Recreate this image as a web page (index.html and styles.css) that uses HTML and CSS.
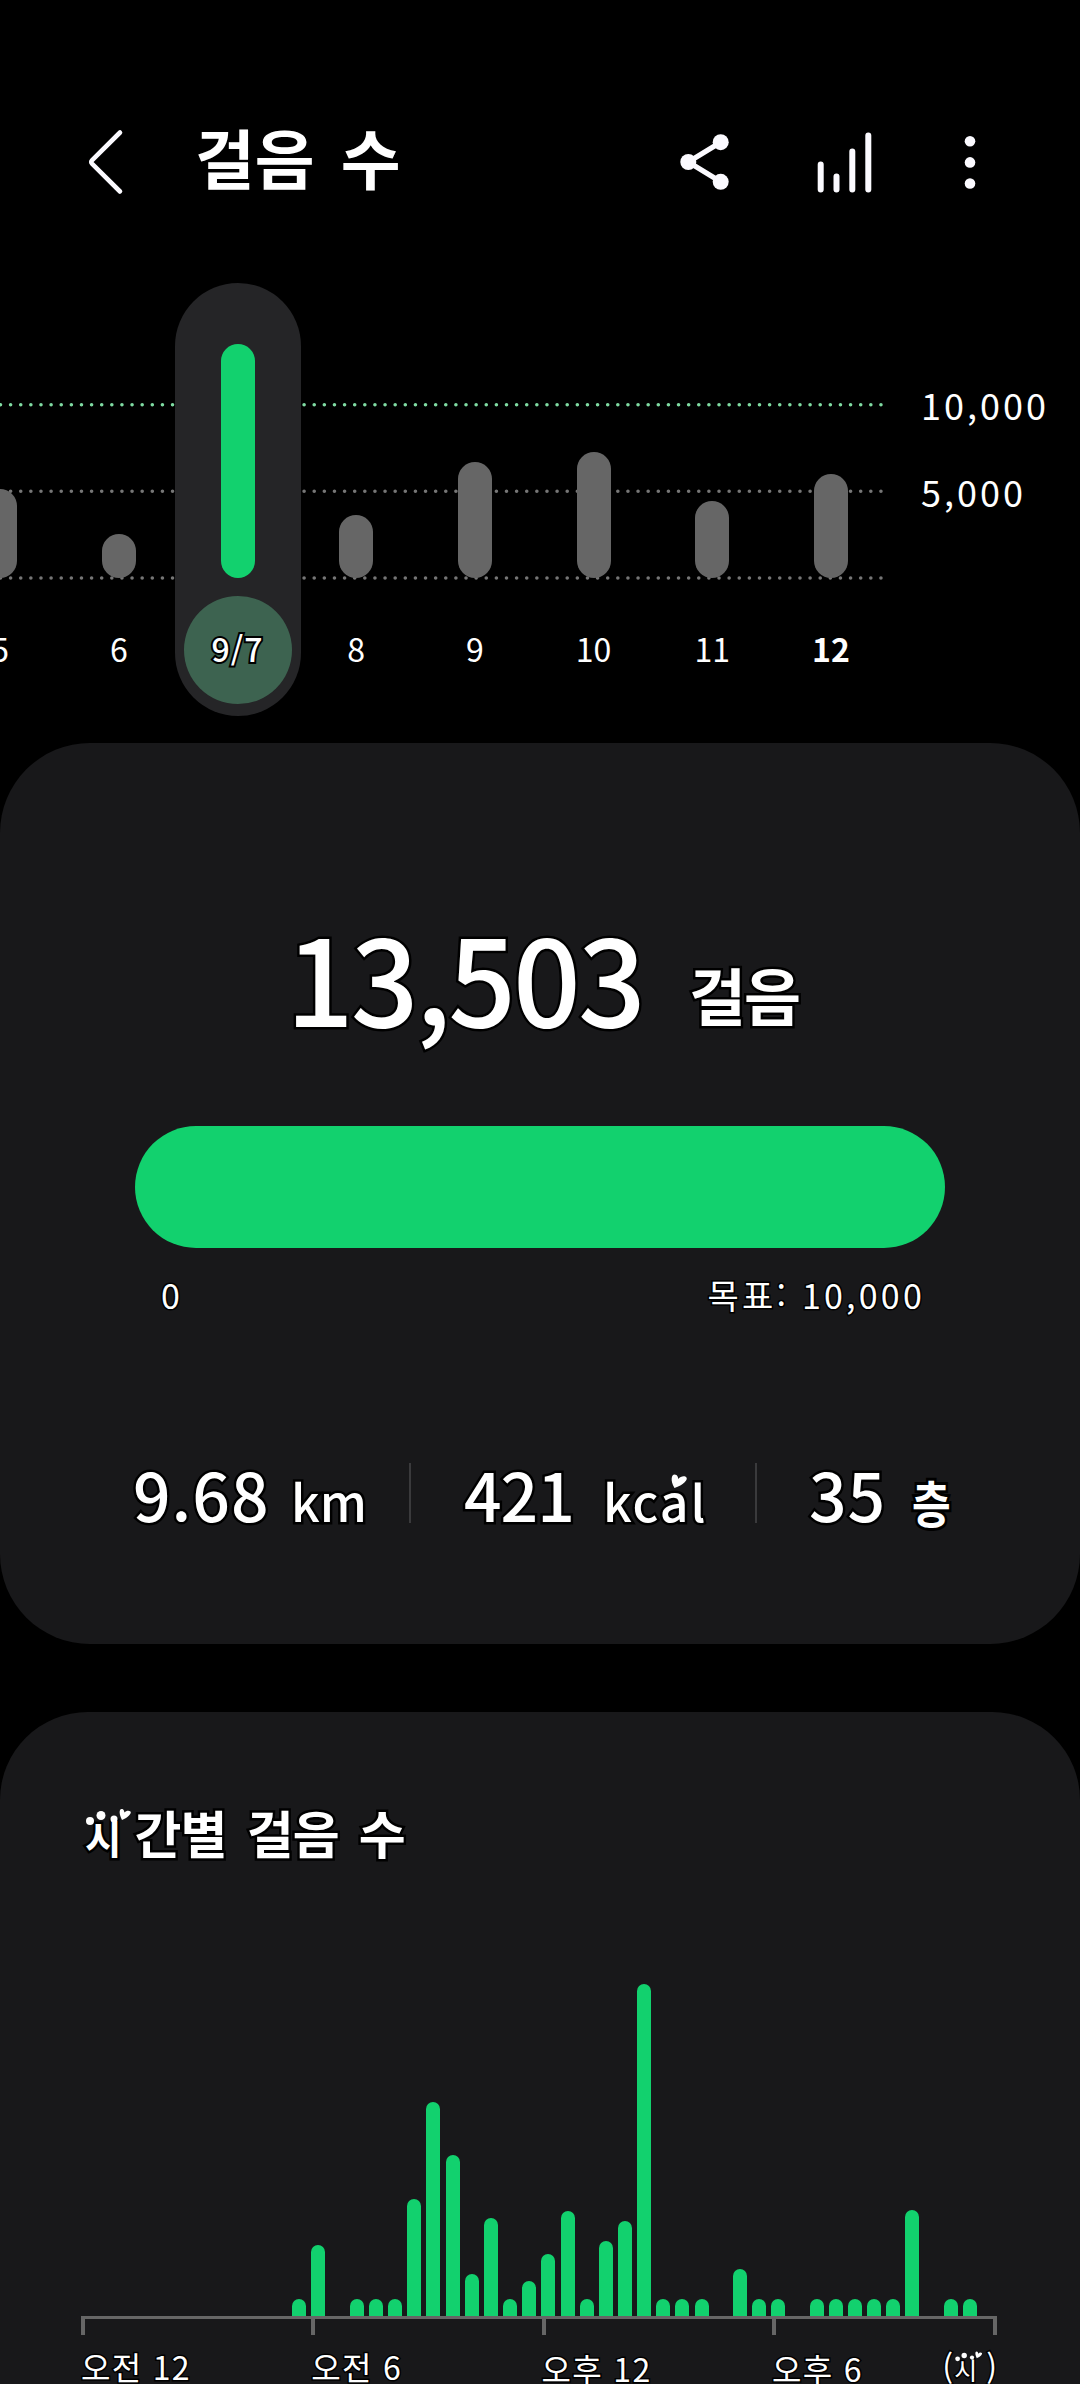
FILE: index.html
```html
<!DOCTYPE html>
<html lang="ko">
<head>
<meta charset="utf-8">
<title>걸음 수</title>
<link rel="stylesheet" href="styles.css">
</head>
<body>
<header class="bar">
  <svg class="back" width="40" height="70" viewBox="0 0 40 70"><path d="M34 5.5 6.2 33.1q-2 1.9 0 3.8L34 64.5"/></svg>
  <h1 class="title">걸음 수</h1>
  <svg class="icon share" width="60" height="70" viewBox="0 0 60 70"><path d="M46.7 15.2 14.3 35l32.4 19.8"/><circle cx="46.7" cy="15.2" r="8"/><circle cx="14.3" cy="35" r="8"/><circle cx="46.7" cy="54.8" r="8"/></svg>
  <svg class="icon stats" width="60" height="70" viewBox="0 0 60 70"><path d="M6.7 37.5v25M22.5 49.5v13M38.3 24.500v38M54.3 8.500v54"/></svg>
  <svg class="icon more" width="20" height="70" viewBox="0 0 20 70"><circle cx="10" cy="14.2" r="5.3"/><circle cx="10" cy="35.400" r="5.3"/><circle cx="10" cy="56.500" r="5.3"/></svg>
</header>

<section class="week">
  <div class="plot">
    <svg class="lines" width="890" height="433" viewBox="0 0 890 433"><path class="goal" d="M.5 121.7H883"/><path d="M.5 208.3H883M.5 295H883"/></svg>
    <div class="days">
      <div class="day"><i style="height:89px"></i><span>5</span></div>
      <div class="day"><i style="height:44px"></i><span>6</span></div>
      <div class="day on"><i style="height:234px"></i><span>9/7</span></div>
      <div class="day"><i style="height:63px"></i><span>8</span></div>
      <div class="day"><i style="height:116px"></i><span>9</span></div>
      <div class="day"><i style="height:126px"></i><span>10</span></div>
      <div class="day"><i style="height:77px"></i><span>11</span></div>
      <div class="day today"><i style="height:104px"></i><span>12</span></div>
    </div>
  </div>
  <div class="scale"><span>10,000</span><span>5,000</span></div>
</section>

<section class="card summary">
  <div class="total"><b>13,503</b><span>걸음</span></div>
  <div class="progress"></div>
  <div class="range"><span>0</span><span>목표: 10,000</span></div>
  <div class="stats-row">
    <div class="stat"><b>9.68</b><span>km</span></div>
    <div class="stat mid"><b>421</b><span>kc<span class="accent">a<svg class="heart" width="18" height="18" viewBox="0 0 12 12"><path d="M3 10C0 5 1 1 3 1s2.500 2 2.500 3C7 2 10 1.500 11 3S9 8 3 10z"/></svg></span>l</span></div>
    <div class="stat last"><b>35</b><span>층</span></div>
  </div>
</section>

<section class="card hourly">
  <h2 class="sub"><span class="smile">시<svg class="face" width="48" height="20" viewBox="0 0 48 20"><circle cx="5" cy="13" r="4"/><circle cx="16" cy="7.500" r="4.500"/><circle cx="29" cy="11" r="3.500"/><path d="M37 12C34 6 34 1 36.500 1s2.500 2 3 3.500C41 2.500 44 2 45.500 3.500S43 10 37 12z"/></svg></span>간별 걸음 수</h2>
  <div class="hours">
    <i></i><i></i><i></i><i></i><i></i><i></i><i></i><i></i><i></i><i></i><i></i>
    <i style="height:17px"></i><i style="height:71px"></i><i></i><i style="height:17px"></i><i style="height:17px"></i><i style="height:17px"></i>
    <i style="height:117px"></i><i style="height:214px"></i><i style="height:161px"></i><i style="height:42px"></i><i style="height:98px"></i><i style="height:17px"></i><i style="height:35px"></i>
    <i style="height:62px"></i><i style="height:105px"></i><i style="height:17px"></i><i style="height:75px"></i><i style="height:95px"></i><i style="height:332px"></i>
    <i style="height:17px"></i><i style="height:17px"></i><i style="height:17px"></i><i></i><i style="height:47px"></i><i style="height:17px"></i><i style="height:17px"></i><i></i>
    <i style="height:17px"></i><i style="height:17px"></i><i style="height:17px"></i><i style="height:17px"></i><i style="height:17px"></i><i style="height:106px"></i><i></i><i style="height:17px"></i><i style="height:17px"></i><i></i>
  </div>
  <div class="axis"><i></i><i></i><i></i><i></i></div>
  <div class="times"><span>오전 12</span><span>오전 6</span><span class="pm">오후 12</span><span class="pm">오후 6</span><span class="unit">(<span class="smile">시<svg class="face" width="30" height="12" viewBox="0 0 48 20"><circle cx="5" cy="13" r="4"/><circle cx="16" cy="7.500" r="4.500"/><circle cx="29" cy="11" r="3.500"/><path d="M37 12C34 6 34 1 36.500 1s2.500 2 3 3.500C41 2.500 44 2 45.500 3.500S43 10 37 12z"/></svg></span>)</span></div>
</section>
</body>
</html>
```
FILE: styles.css
```css
* { box-sizing: border-box; margin: 0; padding: 0; }
body {
  width: 1080px; height: 2384px; overflow: hidden;
  background: #000; color: #fff;
  font-family: "Noto Sans CJK KR", "Noto Sans", sans-serif;
}
svg { display: block; flex: none; }

.bar { height: 283px; padding: 127px 0 0 86px; display: flex; align-items: flex-start; }
.back path { fill: none; stroke: #fbfaff; stroke-width: 4.6; stroke-linecap: round; }
.title { margin: -13px 0 0 69px; width: 479px; font-size: 65px; line-height: 84px; font-weight: 700; word-spacing: 8px; white-space: nowrap; }
.icon { fill: #fbfaff; }
.icon path { fill: none; stroke: #fbfaff; stroke-width: 5.2; stroke-linecap: round; }
.stats { margin-left: 80px; }
.icon.stats path { stroke-width: 6; }
.more { margin-left: 86px; }

.week { height: 460px; display: grid; grid-template-columns: 890px 1fr; }
.plot { position: relative; height: 433px; overflow: hidden; }
.lines { position: absolute; left: 0; top: 0; }
.lines path { fill: none; stroke: #767676; stroke-width: 3.6; stroke-linecap: round; stroke-dasharray: 0 10.12; }
.lines .goal { stroke: #7fdba2; }
.days { position: relative; display: flex; margin-left: -59.2px; height: 433px; }
.day { flex: none; width: 118.7px; display: flex; flex-direction: column; align-items: center; justify-content: flex-end; padding-bottom: 12px; }
.day i { width: 34px; border-radius: 17px; background: #666; }
.day span { margin-top: 18px; width: 108px; height: 108px; line-height: 105px; text-align: center; font-size: 32px; }
.day.on { width: 126px; margin: 0 -3.65px; background: #252527; border-radius: 63px; }
.day.on i { background: #12d16e; }
.day.on span { border-radius: 50%; background: #3d6350; font-weight: 500; letter-spacing: 1px; -webkit-text-stroke: 4px #000; paint-order: stroke fill; }
.day.today span { font-weight: 700; }
.scale { padding: 78px 0 0 31px; display: flex; flex-direction: column; font-size: 36px; letter-spacing: 3px; }
.scale span { height: 87px; line-height: 87px; }

.card { background: #18181a; border-radius: 90px; -webkit-text-stroke: 5px #000; paint-order: stroke fill; }
.summary { height: 901px; padding: 162px 135px 0; }
.total { display: flex; align-items: baseline; height: 221px; padding-left: 151px; line-height: 140px; white-space: nowrap; }
.total b { font-size: 119px; font-weight: 500; width: 403px; letter-spacing: -3px; }
.total span { font-size: 62px; font-weight: 700; letter-spacing: -2px; transform: translateY(-6px); }
.progress { height: 122px; border-radius: 61px; background: #12d16e; }
.range { display: flex; justify-content: space-between; padding: 22px 20px 0 26px; height: 188px; font-size: 34px; line-height: 50px; letter-spacing: 3.2px; -webkit-text-stroke-width: 3px; }
.stats-row { margin-top: 27px; height: 60px; display: flex; }
.stat { flex: none; height: 60px; width: 276px; border-right: 2px solid #3a3a3c; display: flex; align-items: baseline; line-height: 60px; white-space: nowrap; }
.stat b { flex: none; font-size: 66px; font-weight: 500; width: 158px; letter-spacing: 1px; margin-left: -2px; }
.stat span { font-size: 50px; font-weight: 500; }
.stat.mid { width: 346px; padding-left: 55px; }
.stat.mid b { width: 139px; letter-spacing: -1px; }
.stat.mid > span { letter-spacing: 2px; }
.stat.last { width: 190px; border: 0; padding-left: 54px; }
.stat.last b { width: 103px; }
.stat.last > span { font-size: 42px; font-weight: 700; transform: translateY(-3px) scaleY(1.2); }
.accent { position: relative; }
.heart { position: absolute; left: 10px; top: 9px; fill: #fff; }

.hourly { margin-top: 68px; height: 672px; padding: 83px 81px 0; border-radius: 88px 88px 0 0; }
.sub { height: 189px; padding-left: 4px; font-size: 51px; line-height: 74px; font-weight: 700; letter-spacing: -1px; word-spacing: 7px; white-space: nowrap; }
.smile { position: relative; font-size: 0.78em; letter-spacing: 13px; }
.face { position: absolute; left: 0; top: 0; fill: #fff; }
.hours { height: 332px; width: 920px; padding-left: 0.6px; display: flex; align-items: flex-end; gap: 5.17px; }
.hours i { flex: none; width: 14px; border-radius: 7px 7px 0 0; background: #12d16e; }
.axis { height: 19px; width: 916px; border-top: 3px solid #666; border-right: 4px solid #666; display: flex; }
.axis i { flex: none; width: 230.3px; border-left: 4px solid #666; }
.times { display: flex; width: 916px; padding-top: 15px; font-size: 32px; line-height: 32px; white-space: nowrap; -webkit-text-stroke-width: 3px; letter-spacing: 1.3px; }
.times > span { flex: none; width: 230.3px; }
.times .pm { padding-top: 2px; }
.times .unit { width: auto; margin-left: -60px; }
.times .smile { letter-spacing: 9px; }
```
